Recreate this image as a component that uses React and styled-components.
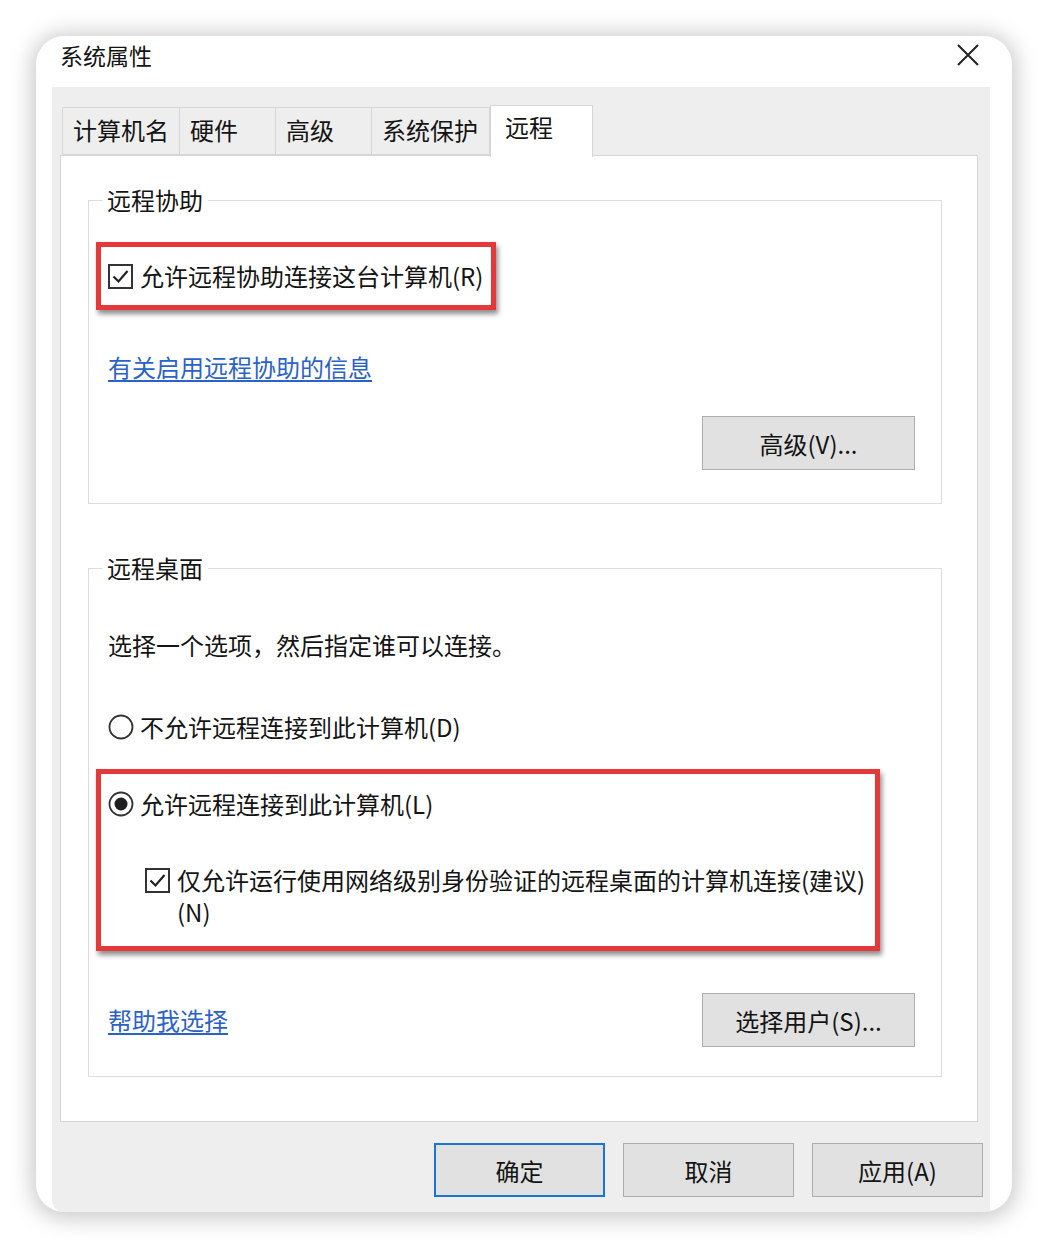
import React from "react";
import styled, { createGlobalStyle } from "styled-components";

// Windows "系统属性" dialog, remote tab

const GlobalStyle = createGlobalStyle`
  html, body {
    margin: 0;
    padding: 0;
    background: #ffffff;
  }
  body {
    font-family: "Noto Sans CJK SC", "Liberation Sans", sans-serif;
    color: #141414;
  }
`;

const Page = styled.div`
  width: 1048px;
  height: 1248px;
  padding: 36px 36px 0 36px;
  box-sizing: border-box;
`;

const Card = styled.div`
  width: 976px;
  height: 1176px;
  background: #ffffff;
  border-radius: 28px;
  box-shadow: 0 2px 22px 4px rgba(0, 0, 0, 0.22);
  overflow: hidden;
  display: flex;
  flex-direction: column;
`;

const TitleBar = styled.div`
  height: 51px;
  box-sizing: border-box;
  display: flex;
  align-items: flex-start;
  justify-content: space-between;
  padding: 3px 32px 0 24px;
  font-size: 23px;
  line-height: 32px;
  flex-shrink: 0;
`;

const CloseButton = styled.div`
  width: 24px;
  height: 32px;
  display: flex;
  align-items: center;
  justify-content: center;
`;

const Body = styled.div`
  flex: 1;
  margin: 0 22px 0 16px;
  background: #eeeeee;
  border-bottom-left-radius: 12px;
  padding: 18px 12px 0 8px;
  display: flex;
  flex-direction: column;
`;

const TabStrip = styled.div`
  display: flex;
  align-items: flex-end;
  padding-left: 2px;
  height: 50px;
  position: relative;
  z-index: 1;
`;

const Tab = styled.div`
  width: ${(p) => p.$w}px;
  height: ${(p) => (p.$active ? 52 : 48)}px;
  box-sizing: border-box;
  border: 1px solid #d6d6d6;
  border-left-width: ${(p) => (p.$first || p.$active ? 1 : 0)}px;
  border-bottom: ${(p) => (p.$active ? "none" : "1px solid #d6d6d6")};
  margin-bottom: ${(p) => (p.$active ? -2 : 0)}px;
  background: ${(p) => (p.$active ? "#ffffff" : "#eeeeee")};
  font-size: 24px;
  line-height: 32px;
  padding: ${(p) => (p.$active ? "5px 0 0 14px" : "6px 0 0 10px")};
  white-space: nowrap;
`;

const Panel = styled.div`
  height: 967px;
  box-sizing: border-box;
  background: #ffffff;
  border: 1px solid #d6d6d6;
  padding: 28px 35px 0 27px;
  display: flex;
  flex-direction: column;
  gap: 48px;
`;

const Group = styled.fieldset`
  margin: 0;
  border: 1px solid #dcdcdc;
  padding: 0 26px ${(p) => p.$bottom}px 19px;
  display: flex;
  flex-direction: column;
  min-inline-size: 0;
`;

const Legend = styled.legend`
  font-size: 24px;
  line-height: 32px;
  padding: 0 5px;
  margin-left: -6px;
`;

const Highlight = styled.div`
  align-self: flex-start;
  width: ${(p) => (p.$w ? `${p.$w}px` : "auto")};
  box-sizing: border-box;
  margin-left: -12px;
  margin-top: ${(p) => p.$top}px;
  border: 5px solid #e5383b;
  box-shadow: 2px 4px 5px rgba(0, 0, 0, 0.45);
  padding: ${(p) => p.$pad};
  display: flex;
  flex-direction: column;
`;

const OptionRow = styled.label`
  display: flex;
  align-items: flex-start;
  gap: 6px;
  font-size: 24px;
  line-height: 32px;
  margin-top: ${(p) => p.$top || 0}px;
  margin-left: ${(p) => p.$indent || 0}px;
`;

const BoxIcon = styled.span`
  width: 26px;
  height: 32px;
  flex-shrink: 0;
  display: flex;
  align-items: center;
`;

const Text = styled.div`
  font-size: 24px;
  line-height: 32px;
  margin-top: ${(p) => p.$top || 0}px;
`;

const Link = styled.a`
  align-self: ${(p) => (p.$center ? "center" : "flex-start")};
  color: #2b62c8;
  text-decoration: underline;
  text-underline-offset: 3px;
  font-size: 24px;
  line-height: 32px;
  margin-top: ${(p) => p.$top || 0}px;
  cursor: pointer;
`;

const Button = styled.button`
  width: ${(p) => p.$w || 171}px;
  height: 54px;
  box-sizing: border-box;
  background: #e1e1e1;
  border: ${(p) => (p.$default ? "2px solid #1b74d8" : "1px solid #adadad")};
  font-family: inherit;
  font-size: 24px;
  color: #141414;
  padding: 0;
  flex-shrink: 0;
`;

const RightAligned = styled.div`
  display: flex;
  justify-content: flex-end;
  margin-top: ${(p) => p.$top}px;
`;

const SplitRow = styled.div`
  display: flex;
  justify-content: space-between;
  align-items: center;
  margin-top: ${(p) => p.$top}px;
`;

const Footer = styled.div`
  display: flex;
  justify-content: flex-end;
  gap: 18px;
  padding: 21px 0 0 0;
  margin-right: -5px;
`;

const Check = () => (
  <BoxIcon>
    <svg width="25" height="25" viewBox="0 0 25 25">
      <rect x="1" y="1" width="23" height="23" fill="#fff" stroke="#333" strokeWidth="2" />
      <path d="M5.5 12.5 L10.5 17.5 L19.5 7" fill="none" stroke="#222" strokeWidth="2.2" />
    </svg>
  </BoxIcon>
);

const Radio = ({ on }) => (
  <BoxIcon>
    <svg width="26" height="26" viewBox="0 0 26 26">
      <circle cx="13" cy="13" r="11.5" fill="#fff" stroke="#333" strokeWidth="1.8" />
      {on && <circle cx="13" cy="13" r="6.5" fill="#1f1f1f" />}
    </svg>
  </BoxIcon>
);

const tabs = [
  { label: "计算机名", w: 118 },
  { label: "硬件", w: 96 },
  { label: "高级", w: 96 },
  { label: "系统保护", w: 118 },
  { label: "远程", w: 103, active: true },
];

export default function App() {
  return (
    <Page>
      <GlobalStyle />
      <Card>
        <TitleBar>
          <span>系统属性</span>
          <CloseButton>
            <svg width="22" height="22" viewBox="0 0 22 22">
              <path d="M1 1 L21 21 M21 1 L1 21" stroke="#222" strokeWidth="2" />
            </svg>
          </CloseButton>
        </TitleBar>
        <Body>
          <TabStrip>
            {tabs.map((t, i) => (
              <Tab key={t.label} $w={t.w} $active={t.active} $first={i === 0}>
                {t.label}
              </Tab>
            ))}
          </TabStrip>
          <Panel>
            <Group $bottom={33}>
              <Legend>远程协助</Legend>
              <Highlight $top={26} $pad="13px 8px 13px 7px">
                <OptionRow>
                  <Check />
                  允许远程协助连接这台计算机(R)
                </OptionRow>
              </Highlight>
              <Link $top={41}>有关启用远程协助的信息</Link>
              <RightAligned $top={33}>
                <Button $w={213}>高级(V)...</Button>
              </RightAligned>
            </Group>
            <Group $bottom={29}>
              <Legend>远程桌面</Legend>
              <Text $top={45}>选择一个选项，然后指定谁可以连接。</Text>
              <OptionRow $top={50}>
                <Radio />
                不允许远程连接到此计算机(D)
              </OptionRow>
              <Highlight $top={26} $w={784} $pad="14px 8px 18px 7px">
                <OptionRow>
                  <Radio on />
                  允许远程连接到此计算机(L)
                </OptionRow>
                <OptionRow $top={44} $indent={37}>
                  <Check />
                  <span>
                    仅允许运行使用网络级别身份验证的远程桌面的计算机连接(建议)
                    <br />
                    (N)
                  </span>
                </OptionRow>
              </Highlight>
              <SplitRow $top={42}>
                <Link $center>帮助我选择</Link>
                <Button $w={213}>选择用户(S)...</Button>
              </SplitRow>
            </Group>
          </Panel>
          <Footer>
            <Button $default>确定</Button>
            <Button>取消</Button>
            <Button>应用(A)</Button>
          </Footer>
        </Body>
      </Card>
    </Page>
  );
}
